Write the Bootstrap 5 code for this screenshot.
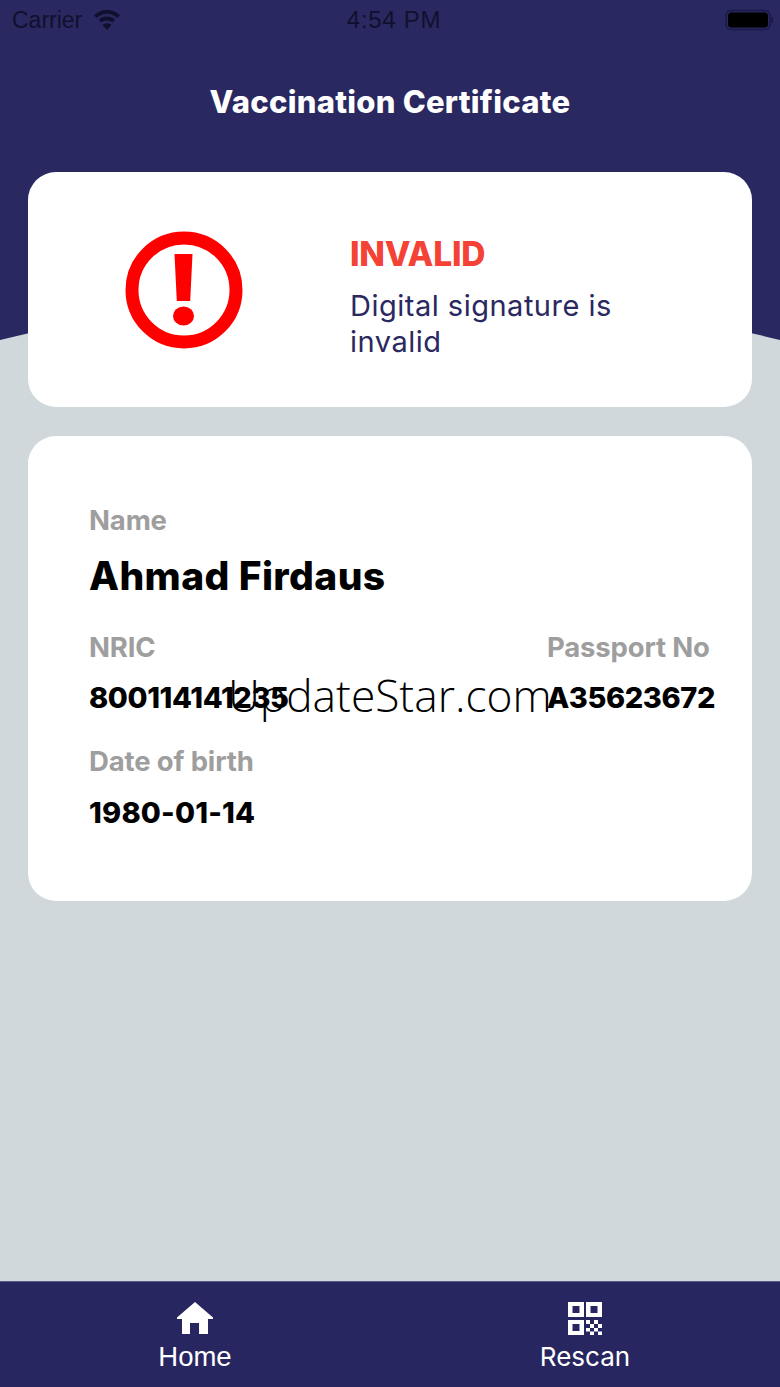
<!DOCTYPE html>
<html lang="en">
<head>
<meta charset="utf-8">
<title>Vaccination Certificate</title>
<link href="https://cdn.jsdelivr.net/npm/bootstrap@5.3.0/dist/css/bootstrap.min.css" rel="stylesheet">
<style>
html,body{height:100%;margin:0}
body{background:#d0d8db;font-family:"Inter",sans-serif;overflow:hidden}
.screen{width:780px;height:1387px;position:relative}
.backdrop{position:absolute;top:0;left:0;width:780px;height:345px}
.content{position:relative}
.status{height:40px;padding:0 7px 0 12px;color:#10102e;font-family:"Liberation Sans",sans-serif;font-size:23px}
.status .clock{position:absolute;left:0;right:0;text-align:center;font-size:24px;line-height:28px;letter-spacing:.7px;top:6px;padding-left:8px}
.wifi{margin-left:3px}
.page-title{height:132px;padding-top:44px;margin:0;color:#fff;font-family:"Inter",sans-serif;font-weight:800;font-size:31px;line-height:36px;text-align:center;letter-spacing:.25px}
.sheet{background:#fff;border-radius:28px;margin:0 28px;border:0}
.status-sheet{height:235px}
.alert-icon{width:322px;padding-left:97px}
.status-text{padding-top:15px}
.verdict{color:#f44336;font-weight:800;font-size:33.500px;line-height:38px;letter-spacing:-.2px;margin:0 0 15px}
.reason{color:#2a2860;font-size:29px;line-height:36px;margin:0;width:300px;letter-spacing:.5px}
.info-sheet{height:465px;margin-top:29px;padding:66px 37px 0 61px;position:relative}
.lbl{color:#9e9e9e;font-weight:700;font-size:27.500px;line-height:36px;letter-spacing:-.15px}
.big{color:#000;font-weight:800;font-size:39px;line-height:46px;margin-top:15px;letter-spacing:.4px}
.val{color:#000;font-weight:800;font-size:29px;line-height:36px;margin-top:15px;letter-spacing:-.4px}
.val-wide{letter-spacing:.2px;margin-top:16px}
.id-row{margin-top:30px}
.birth-lbl{margin-top:27px}
.watermark{position:absolute;left:200px;top:229px;font-family:"Open Sans",sans-serif;font-weight:300;font-size:44.300px;line-height:60px;color:#000;white-space:nowrap}
.tabbar{position:absolute;left:0;right:0;bottom:0;height:106px;background:#282660;border-top:1px solid #5a5a86}
.tab{color:#fff;font-size:26px;line-height:32px;padding-top:20px}
.tab svg{display:block;margin-bottom:6px}
.tab-home{font-family:"Liberation Sans",sans-serif;font-size:27.500px}
</style>
</head>
<body>
<div class="screen">
  <svg class="backdrop" viewBox="0 0 780 345" aria-hidden="true"><path fill="#2a2860" d="M0 0H780V340Q390 243 0 340Z"/></svg>
  <div class="content">
    <div class="status d-flex align-items-center justify-content-between">
      <div class="d-flex align-items-center gap-2">
        <span>Carrier</span>
        <svg class="wifi" width="28" height="20" viewBox="0 0 28 20"><path fill="#10102e" d="M14 0C9 0 4.500 1.900 1 5.200l2.600 2.800C6.400 5.400 10 3.800 14 3.800s7.600 1.600 10.400 4.200L27 5.200C23.500 1.900 19 0 14 0zM14 6.600c-3.200 0-6 1.200-8.200 3.200l2.600 2.800c1.500-1.300 3.500-2.200 5.600-2.200s4.100.9 5.600 2.200l2.600-2.800C20 7.800 17.200 6.600 14 6.600zM14 13.200c-1.800 0-3.300.7-4.500 1.700L14 20l4.500-5.100c-1.200-1-2.700-1.700-4.500-1.700z"/></svg>
      </div>
      <span class="clock">4:54 PM</span>
      <svg width="48" height="22" viewBox="0 0 48 22"><rect x="1" y="1.500" width="44" height="19" rx="5" fill="none" stroke="#1b1a48" stroke-width="1.500"/><rect x="3" y="3.500" width="40" height="15" rx="3.500" fill="#000"/><rect x="46" y="8" width="2" height="6" rx="1" fill="#1b1a48"/></svg>
    </div>
    <h1 class="page-title">Vaccination Certificate</h1>
    <div class="sheet status-sheet d-flex align-items-center">
      <div class="alert-icon flex-shrink-0">
        <svg width="118" height="118" viewBox="0 0 118 118" class="d-block">
          <circle cx="59" cy="59" r="52" fill="none" stroke="#f00" stroke-width="13"/>
          <path fill="#f00" d="M49.500 23h18l-2.300 47H51.800z"/>
          <ellipse cx="58.500" cy="85" rx="10.500" ry="9.500" fill="#f00"/>
        </svg>
      </div>
      <div class="status-text">
        <p class="verdict">INVALID</p>
        <p class="reason">Digital signature is invalid</p>
      </div>
    </div>
    <div class="sheet info-sheet">
      <div class="lbl">Name</div>
      <div class="big">Ahmad Firdaus</div>
      <div class="id-row d-flex justify-content-between">
        <div>
          <div class="lbl">NRIC</div>
          <div class="val">800114141235</div>
        </div>
        <div>
          <div class="lbl">Passport No</div>
          <div class="val">A35623672</div>
        </div>
      </div>
      <div class="lbl birth-lbl">Date of birth</div>
      <div class="val val-wide">1980-01-14</div>
      <div class="watermark">UpdateStar.com</div>
    </div>
  </div>
  <nav class="tabbar d-flex">
    <div class="tab tab-home w-50 d-flex flex-column align-items-center">
      <svg width="36" height="33" viewBox="0 0 36 33"><path fill="#fff" d="M18 0L36 15.500V17H31V32H22V21H13V32H5V17H0V15.500z"/></svg>
      <span>Home</span>
    </div>
    <div class="tab w-50 d-flex flex-column align-items-center">
      <svg width="34" height="33" viewBox="0 0 34 33">
        <path fill="#fff" fill-rule="evenodd" d="M0 0h16v15H0zM4.500 4v7h7V4zM18 0h16v15H18zM22.500 4v7h7V4zM0 18h16v15H0zM4.500 22v7h7V22z"/>
        <path fill="#fff" d="M18 18h4v4h-4zM26 18h4v4h-4zM22 22h4v4h-4zM30 22h4v4h-4zM18 26h4v3.500h-4zM26 26h4v3.500h-4zM22 29.500h4V33h-4zM30 29.500h4V33h-4z"/>
      </svg>
      <span>Rescan</span>
    </div>
  </nav>
</div>
<script src="https://cdn.jsdelivr.net/npm/bootstrap@5.3.0/dist/js/bootstrap.bundle.min.js"></script>
</body>
</html>
